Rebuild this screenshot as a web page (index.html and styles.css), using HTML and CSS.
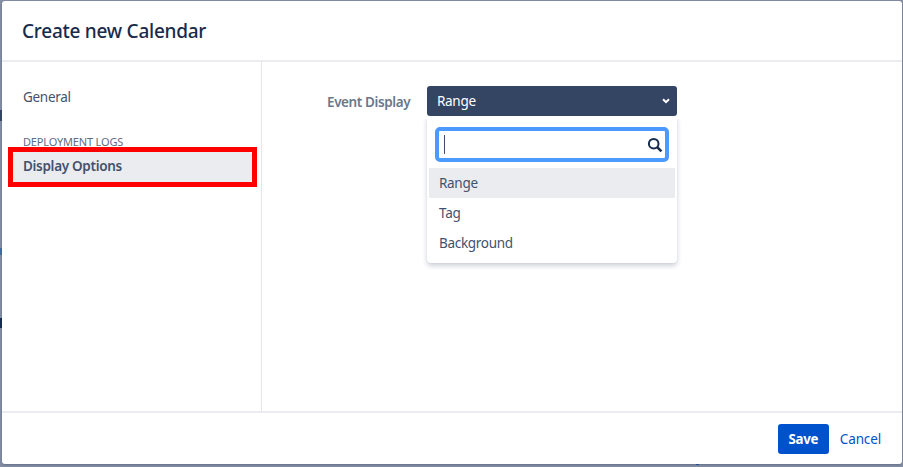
FILE: index.html
```html
<!DOCTYPE html>
<html lang="en">
<head>
<meta charset="utf-8">
<title>Create new Calendar</title>
<link rel="stylesheet" href="styles.css">
</head>
<body>
<i class="edge edge-a"></i><i class="edge edge-b"></i><i class="edge edge-c"></i><i class="edge edge-d"></i>
<section class="dialog">
  <header class="header"><h1>Create new Calendar</h1></header>
  <div class="body">
    <nav class="sidebar">
      <a class="nav-item">General</a>
      <h2 class="nav-heading">DEPLOYMENT LOGS</h2>
      <div class="highlight"><a class="nav-item selected">Display Options</a></div>
    </nav>
    <main class="content">
      <label class="label">Event Display</label>
      <div class="select">
        <div class="select-button"><span>Range</span>
          <svg width="8" height="6" viewBox="0 0 8 6"><path d="M1 1.2 4 4.2 7 1.2" fill="none" stroke="#fff" stroke-width="2"/></svg>
        </div>
        <div class="dropdown">
          <div class="search"><i class="caret"></i>
            <svg width="16" height="16" viewBox="0 0 16 16"><circle cx="6.7" cy="6.7" r="4.8" fill="none" stroke="#172b4d" stroke-width="2"/><path d="M10.2 10.2 14.4 14.4" stroke="#172b4d" stroke-width="2.6"/></svg>
          </div>
          <div class="option active">Range</div>
          <div class="option">Tag</div>
          <div class="option">Background</div>
        </div>
      </div>
    </main>
  </div>
  <footer class="footer"><button class="save">Save</button><a class="cancel">Cancel</a></footer>
</section>
</body>
</html>
```
FILE: styles.css
```css
* { box-sizing: border-box; }
body {
  margin: 0;
  width: 903px;
  height: 467px;
  padding: 1px 1px 2px 2px;
  overflow: hidden;
  background: #8790a5;
  font: 13.5px/20px "Noto Sans", sans-serif;
  letter-spacing: -.3px;
  color: #42526e;
}
.dialog {
  display: flex;
  flex-direction: column;
  width: 900px;
  height: 463px;
  border-radius: 3px;
  background: #fff;
  box-shadow: 0 1px 3px rgba(9, 30, 66, .3);
}
.header {
  height: 61px;
  padding: 15px 20px;
  border-bottom: 2px solid #ebecf0;
}
h1 {
  margin: 0;
  font-size: 19px;
  line-height: 30px;
  font-weight: 500;
  letter-spacing: -.25px;
  color: #172b4d;
}
.body { display: flex; flex: 1; }
.sidebar {
  width: 260px;
  padding: 20px 10px 0 11px;
  border-right: 1px solid #e4e6ea;
}
.nav-item {
  display: block;
  height: 30px;
  padding: 5px 10px;
  border-radius: 3px;
}
.nav-heading {
  margin: 20px 0 0;
  padding-left: 10px;
  font-size: 11px;
  font-weight: 400;
  line-height: 20px;
  letter-spacing: -.17px;
  color: #5e6c84;
}
.highlight {
  position: relative;
  width: 249px;
  height: 40px;
  margin: -5px 0 0 -5px;
  border: 5px solid #f00;
  background: #fff;
}
.selected {
  padding-top: 4px;
  background: #ebecf0;
  font-weight: 600;
}
.content { display: flex; flex: 1; padding: 24px 0 0 65px; }
.label { width: 100px; padding-top: 6px; font-weight: 600; letter-spacing: -.4px; color: #6b778c; }
.select { width: 250px; }
.select-button {
  display: flex;
  align-items: center;
  justify-content: space-between;
  height: 30px;
  padding: 0 7px 0 10px;
  border-radius: 3px;
  background: #344563;
  color: #fff;
}
.dropdown {
  height: 147px;
  padding: 11px 2px 0;
  border-radius: 0 0 4px 4px;
  box-shadow: 0 3px 5px rgba(9, 30, 66, .2), 0 0 1px rgba(9, 30, 66, .12);
  clip-path: inset(3px -8px -10px -8px);
}
.search {
  display: flex;
  align-items: center;
  justify-content: space-between;
  width: 234px;
  height: 35px;
  margin: 0 0 6px 6px;
  padding: 0 2px 0 5px;
  border: 4px solid #4c9aff;
  border-radius: 5px;
}
.caret { width: 1px; height: 19px; background: #42526e; }
.option { height: 30px; padding: 5px 10px; }
.active { background: #ebecf0; }
.footer {
  display: flex;
  align-items: center;
  justify-content: flex-end;
  gap: 11px;
  height: 53px;
  padding: 1px 21px 0 0;
  border-top: 2px solid #ebecf0;
}
.save {
  width: 51px;
  height: 30px;
  padding: 0;
  border: 0;
  border-radius: 3px;
  background: #0052cc;
  color: #fff;
  font: 700 13.3px/20px "Noto Sans", sans-serif;
  letter-spacing: -.3px;
}
.cancel { color: #0052cc; letter-spacing: -.15px; }
.edge { position: absolute; left: 0; width: 2px; }
.edge-a { top: 110px; height: 11px; background: #344563; }
.edge-b { top: 248px; height: 7px; background: #3c6ca8; }
.edge-c { top: 318px; height: 10px; background: #172b4d; }
.edge-d { top: 464px; left: 696px; width: 3px; height: 1px; background: #24508f; }
```
